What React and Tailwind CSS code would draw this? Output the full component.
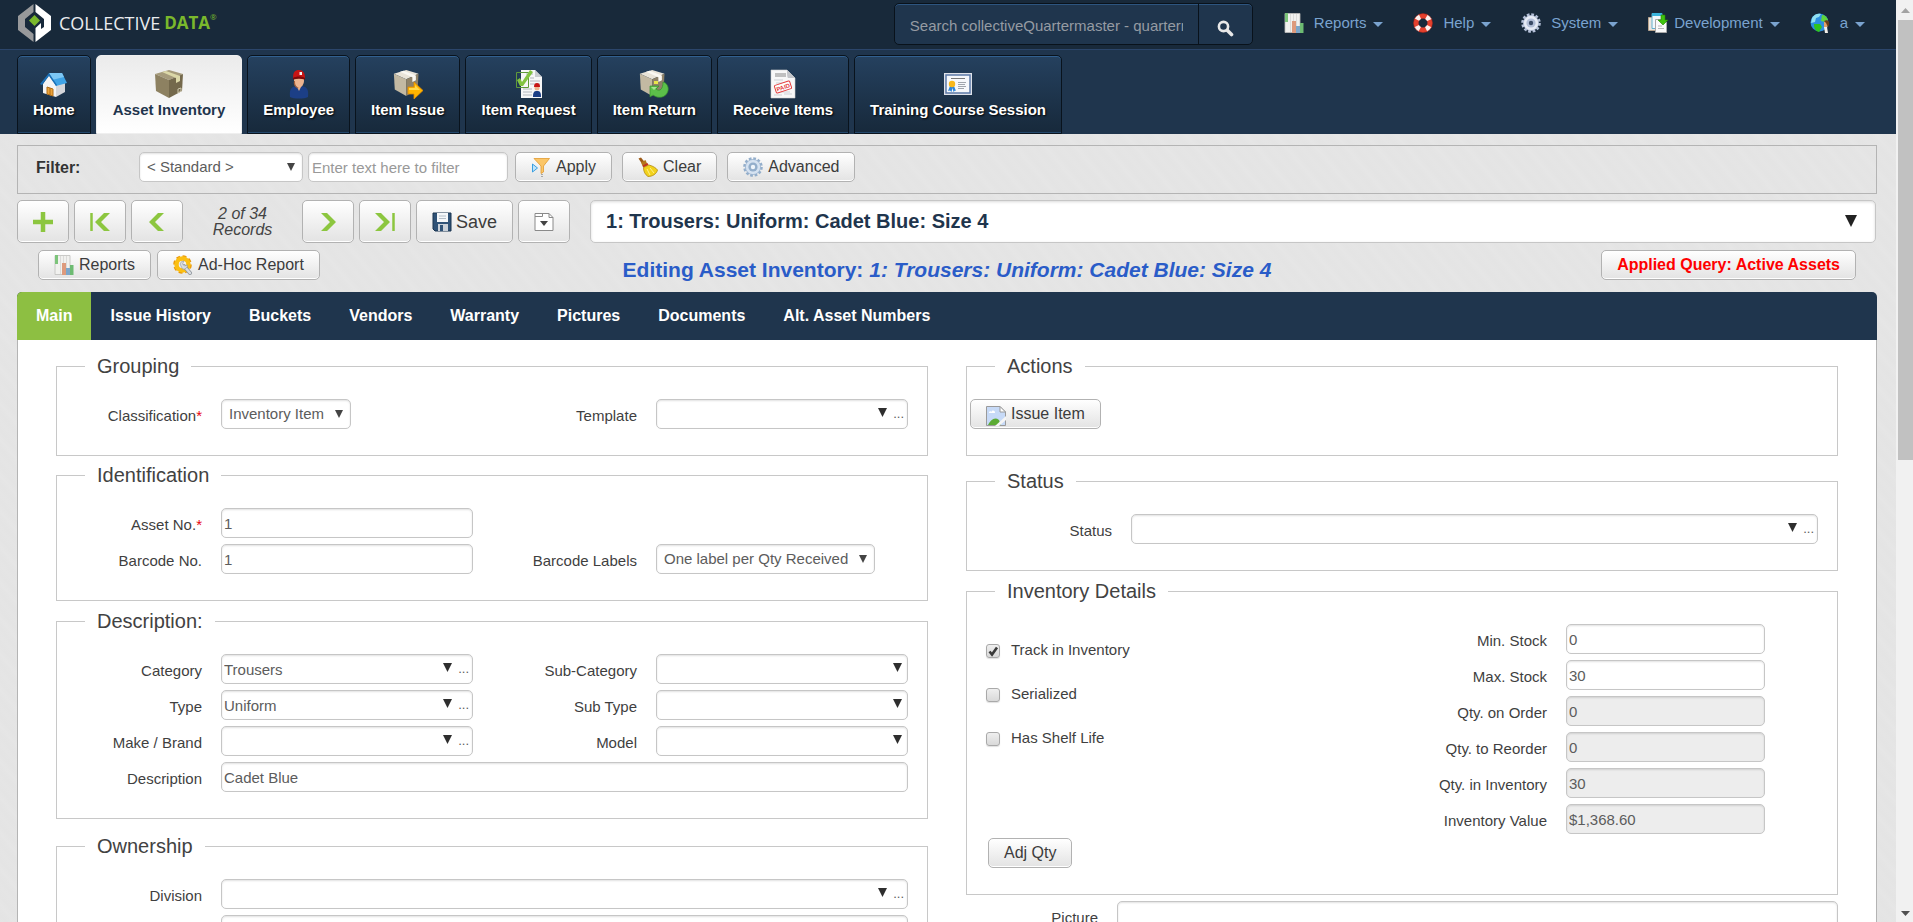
import { useState } from 'react';

/* ---------- icons ---------- */

const LogoMark = () => (
  <svg width="33" height="40" viewBox="0 0 33 40" aria-hidden="true">
    <path d="M15.500 1 0 13v14l15.500 12v-8L7 24V16l8.500-7z" fill="#98999b" />
    <path d="M17.500 1 33 13v14L17.500 39V25l5.500-5v6l3-2V16l-8.500-7z" fill="#fff" />
    <path d="M16.500 12 22 17.500 16.500 23 11 17.500z" fill="#7ab82c" />
  </svg>
);

const HomeIcon = () => (
  <svg width="30" height="30" viewBox="0 0 30 30" aria-hidden="true">
    <path d="M4 15 10 6l7 10v12L4 24z" fill="#f4f4f5" />
    <path d="m17 16 9-2v9l-9 5z" fill="#d5d6da" />
    <path d="M10 4h13l5 10-11 3z" fill="#3fa3e6" />
    <path d="M10 4h13l2 4-12 3z" fill="#7cc7f5" />
    <path d="M10 4 1 15l2 1 7-9 7 10 1-1z" fill="#1b6fb5" />
    <path d="m8 18 6 2v7l-6-2z" fill="#e9a23b" stroke="#b06c14" />
    <path d="M11 19v7" stroke="#b06c14" />
  </svg>
);

const Carton = ({ light }) => (
  <>
    <path d="M1 5 15 1l14 4-14 6z" fill={light ? '#e9e4d8' : '#a69b7b'} />
    <path d="m1 5 14 6v18L2 22z" fill={light ? '#c3b9a2' : '#8d8161'} />
    <path d="m29 5-14 6v18l13-7z" fill={light ? '#8f8268' : '#74694c'} />
    <path d="m8 3 14 6v5l4-2V7L12 2z" fill={light ? '#faf8f2' : '#dcd8a8'} />
  </>
);

const BoxIcon = () => (
  <svg width="30" height="30" viewBox="0 0 30 30" aria-hidden="true">
    <Carton />
    <path d="M24 20l3-1v3l-3 2z" fill="none" stroke="#cfc9ae" />
  </svg>
);

const EmployeeIcon = () => (
  <svg width="30" height="30" viewBox="0 0 30 30" aria-hidden="true">
    <path d="M6 28c-1-9 2-11 9-11s10 2 9 11c-4 2-14 2-18 0z" fill="#1c3f86" />
    <path d="M12 16h6l-3 6z" fill="#e8b08c" />
    <ellipse cx="15" cy="12" rx="5" ry="6.500" fill="#edb48f" />
    <path d="M11 12c0 4 1 6 4 7-3 1-6-3-5-7z" fill="#a5613a" />
    <path d="M9 9c0-6 2-8 6-8s6 3 6 8c-4-1-8-1-12 0z" fill="#c81414" />
    <path d="M9 9c3-2 9-2 12 0v1.500c-4-1-8-1-12 0z" fill="#7d0808" />
    <path d="M15.500 3h2.500v3h-2.500z" fill="#f5f5f5" />
  </svg>
);

const IssueIcon = () => (
  <svg width="30" height="30" viewBox="0 0 30 30" aria-hidden="true">
    <g transform="scale(.88 .93)"><Carton light /></g>
    <path d="M15 18h6v-5l9 8.500L21 30v-5h-6z" fill="#ffb400" stroke="#e08a00" strokeWidth=".8" />
    <path d="M16 19h6v-3l5 5H16z" fill="#ffd84a" />
  </svg>
);

const RequestIcon = () => (
  <svg width="30" height="30" viewBox="0 0 30 30" aria-hidden="true">
    <path d="M7 1h14l7 7v21H7z" fill="#f7f7f7" />
    <path d="m21 1 7 7h-7z" fill="#c9ccd0" />
    <path d="M12 5h7M16 9h4M16 12h10M16 15h10M9 20h9M9 23h9M9 26h9" stroke="#b4b8bd" />
    <path d="M2.500 3.500h12v15h-12z" fill="none" stroke="#5f9a3a" />
    <path d="m3 11 3-2 2 4L16 1l3 2L9 17H6z" fill="#82c341" />
    <path d="M19 28c0-5 1-6 4-6s4 1 4 6z" fill="#1c3f86" />
    <circle cx="23" cy="19" r="2.500" fill="#edb48f" />
    <path d="M20 18c0-3 1-4 3-4s3 1 3 4z" fill="#c81414" />
  </svg>
);

const ReturnIcon = () => (
  <svg width="30" height="30" viewBox="0 0 30 30" aria-hidden="true">
    <g transform="scale(.88 .93)"><Carton light /></g>
    <path d="M15 12h4v3h-4z" fill="#e8e64a" />
    <path d="M11 17h9l-3 3c4 3 7 0 7-7 4 1 6 5 5 9-2 7-10 8-15 4l-3 2z" fill="#5cc04a" stroke="#348f2c" strokeWidth=".7" />
    <path d="M12 18h6l-3 3" fill="#a5e58f" />
  </svg>
);

const PaidIcon = () => (
  <svg width="30" height="30" viewBox="0 0 30 30" aria-hidden="true">
    <path d="M3 1h16l8 8v20H3z" fill="#f8f8f8" stroke="#d0d0d0" strokeWidth=".6" />
    <path d="M19 1c0 4 0 7 1 8h7z" fill="#c4c6ca" />
    <path d="M7 5h11M7 7h11" stroke="#888" />
    <path d="M6 11h9M6 26h8M16 25h8M8 14h14M8 23h14" stroke="#cfd1d6" />
    <g transform="rotate(-18 15 18)">
      <rect x="7" y="14" width="16" height="8" rx="1" fill="#fff" stroke="#e43b3b" />
      <text x="15" y="20.500" textAnchor="middle" fontSize="6" fontWeight="700" fill="#e43b3b" className="[text-shadow:none]">PAID</text>
    </g>
  </svg>
);

const CertificateIcon = () => (
  <svg width="30" height="30" viewBox="0 0 30 30" aria-hidden="true">
    <path d="M1 4h28v22H1z" fill="#dfe3ea" />
    <path d="M3 6h24v18H3z" fill="#f6f8fb" stroke="#5c79a8" strokeWidth="1.500" />
    <path d="M8 9.500h14" stroke="#777" />
    <path d="M15 13.500h8M15 15.500h7M15 17.500h8M15 19.500h6" stroke="#8a8f98" strokeWidth=".8" />
    <path d="m7 17-2 5 2-.5 1.500 1.500 1-4 1 4 1.500-1.500 1 .5-2-5z" fill="#2f86d8" />
    <circle cx="9" cy="15" r="3.200" fill="#f9b81a" />
  </svg>
);

const ChartIcon = () => (
  <svg width="20" height="20" viewBox="0 0 20 20" aria-hidden="true">
    <path d="M1 .5h15v19H1z" fill="#f1f1ef" stroke="#bfbfbc" strokeWidth=".8" />
    <path d="M1 0h3v9H1z" fill="#7cc47a" />
    <path d="M6.500 1v18M9.500 1v18M12.500 1v18" stroke="#d6d6d3" strokeWidth=".8" />
    <path d="M8 8h4v12H8z" fill="#dd9a7d" />
    <path d="M12 13h4v7h-4z" fill="#7ba6c9" />
    <path d="M16 10h3.500v10H16z" fill="#6dbb72" />
  </svg>
);

const LifebuoyIcon = () => (
  <svg width="20" height="20" viewBox="0 0 20 20" aria-hidden="true">
    <circle cx="10" cy="10" r="7" fill="none" stroke="#e5402d" strokeWidth="5" />
    <circle cx="10" cy="10" r="7" fill="none" stroke="#fbf3f0" strokeWidth="5" strokeDasharray="4.400 6.600" strokeDashoffset="-3.300" />
    <circle cx="10" cy="10" r="9.500" fill="none" stroke="#a92518" strokeWidth=".5" />
  </svg>
);

const GearIcon = ({ fill, dark, hub }) => (
  <svg width="20" height="20" viewBox="0 0 20 20" aria-hidden="true">
    <circle cx="10" cy="10" r="8.500" fill="none" stroke={dark} strokeWidth="2.600" strokeDasharray="2.700 1.750" />
    <circle cx="10" cy="10" r="7.600" fill={fill} stroke={dark} strokeWidth=".7" />
    <circle cx="10" cy="10" r="4.600" fill={dark} />
    <circle cx="10" cy="10" r="2.200" fill={hub} />
  </svg>
);

const DevIcon = () => (
  <svg width="20" height="20" viewBox="0 0 20 20" aria-hidden="true">
    <path d="M.5 4.500h9v13h-9z" fill="#e9e4dd" stroke="#b9a48d" />
    <path d="M4 .5h10v15H4z" fill="#f2f8fb" stroke="#62b2cf" />
    <path d="M4 0h10v3H4z" fill="#3ab5dd" />
    <path d="M7.500 6.500h8l3 3v10h-11z" fill="#fafafa" stroke="#a8a8a8" />
    <path d="M10 13h4M10 15.500h6" stroke="#b5b5b5" />
    <path d="M13 2h4v5h3l-5 5-5-5h3z" fill="#3fc20c" stroke="#258503" strokeWidth=".6" />
  </svg>
);

const GlobeIcon = () => (
  <svg width="20" height="20" viewBox="0 0 20 20" aria-hidden="true">
    <circle cx="9.500" cy="9.500" r="9" fill="#2b8fe0" />
    <path d="M2 5c2-4 6-5 9-4l-2 3-3 1-1 4-4 1z" fill="#8fe0f2" />
    <path d="m4 11 6 0 2 3-3 5c-4-1-5-4-5-8z" fill="#2ec41e" />
    <path d="M12 2c3 0 5 2 6 5l-3 2-4-1z" fill="#5fd63a" />
    <path d="M14 9c3-1 4 0 4 3l-1 3h-3z" fill="#e0a06c" />
    <path d="M14 8c3-2 6 0 5 4l-1 2-2-4z" fill="#6b3d18" />
    <path d="M14 14h3l1 6h-3z" fill="#f1eee8" />
  </svg>
);

const FunnelIcon = () => (
  <svg width="20" height="20" viewBox="0 0 20 20" aria-hidden="true">
    <path d="M1.500 7v8l5-4z" fill="#bfe4fb" stroke="#3b9fe0" />
    <path d="M3 1.500h15.500L12.500 9v6l-2.500 1.500V9z" fill="#fbc668" stroke="#e29a2f" strokeWidth=".8" />
    <path d="M11 17v3" stroke="#666" strokeDasharray="1 1" />
  </svg>
);

const BroomIcon = () => (
  <svg width="20" height="20" viewBox="0 0 20 20" aria-hidden="true">
    <path d="M.5 1.500 3 .5l4 5-2.500 2z" fill="#9c5a17" />
    <path d="M3 5.500 7.500 3l2 4.500L5 10z" fill="#b4761c" />
    <path d="m4.500 8.500 5-2.500 1 2-5 2.500z" fill="#c4331f" />
    <path d="M5.500 10.500 11 8c4 1 7 3 8.500 5-1 4-5 6.500-9.500 6.500-3-2-4.500-5-4.500-9z" fill="#f2d21c" stroke="#b28a0b" strokeWidth=".8" />
    <path d="m9 12 3 6M12 11l4 5" stroke="#fff08a" />
  </svg>
);

const WrenchGearIcon = () => (
  <svg width="20" height="20" viewBox="0 0 20 20" aria-hidden="true">
    <circle cx="9.500" cy="9.500" r="7.800" fill="none" stroke="#e8960a" strokeWidth="3" strokeDasharray="3.600 2.500" />
    <circle cx="9.500" cy="9.500" r="6" fill="none" stroke="#fbbf12" strokeWidth="4.500" />
    <path d="m11 11 6 7" stroke="#8f959c" strokeWidth="4" strokeLinecap="round" />
    <path d="m11 11 6 7" stroke="#d9dde1" strokeWidth="2.500" strokeLinecap="round" />
    <path d="M7 9a4 4 0 0 1 4-3L9.500 9l2 2 3-1a4 4 0 0 1-5 4z" fill="#d9dde1" stroke="#8f959c" strokeWidth=".6" />
  </svg>
);

const FloppyIcon = () => (
  <svg width="20" height="20" viewBox="0 0 20 20" aria-hidden="true">
    <path d="M1 1h18v18H3l-2-2z" fill="#2f5277" stroke="#1a3550" />
    <path d="M5 1h11v9H5z" fill="#f5f7f9" />
    <path d="M7 4h7M7 6.500h7" stroke="#b4bec8" />
    <path d="M6 12h10v7H6z" fill="#c9d0d8" />
    <path d="M8 13h3v6H8z" fill="#2f5277" />
  </svg>
);

const BrokenImageIcon = () => (
  <svg width="20" height="20" viewBox="0 0 20 20" className="mt-1" aria-hidden="true">
    <path d="M.5.500H14l5.500 5.500v13.500H.5z" fill="#c7daf7" stroke="#9a9a9a" />
    <path d="M14 .5v5.500h5.500z" fill="#fff" stroke="#9a9a9a" />
    <path d="M3 7c0-2 2-2 2.500-1C6 4 9 4 9 7z" fill="#fff" />
    <path d="M2 19c3-6 7-8 11-5l2 5z" fill="#5cab34" />
    <path d="M20 10 9 20h4l7-6z" fill="#f5f5f5" />
  </svg>
);

const PageDownIcon = () => (
  <svg width="20" height="20" viewBox="0 0 20 20" aria-hidden="true">
    <path d="M1 1.500h14l4 4v13H1z" fill="#fff" stroke="#8a8a8a" />
    <path d="M1 4.500h7.500v-3" fill="none" stroke="#8a8a8a" />
    <path d="M15 1.500v4h4" fill="none" stroke="#8a8a8a" />
    <path d="M6 9h8l-4 5z" fill="#444" />
  </svg>
);

const PlusIcon = () => (
  <svg width="20" height="20" viewBox="0 0 20 20" aria-hidden="true">
    <path d="M10 0v20M0 10h20" stroke="#8cc63f" strokeWidth="4.500" />
  </svg>
);

const ChevronIcon = ({ bar, flip }) => (
  <svg width="20" height="20" viewBox="0 0 20 20" aria-hidden="true">
    <g transform={flip ? 'matrix(-1 0 0 1 20 0)' : undefined}>
      {bar && <path d="M1.500 1v18" stroke="#8cc63f" strokeWidth="2.500" />}
      <path d={bar ? 'M20 1h-6l-9 9 9 9h6l-9-9z' : 'M17 1h-6l-9 9 9 9h6l-9-9z'} fill="#8cc63f" />
    </g>
  </svg>
);

const SearchIcon = () => (
  <svg width="17" height="17" viewBox="0 0 17 17" aria-hidden="true">
    <circle cx="6.500" cy="6.500" r="4.600" fill="none" stroke="#e8e8e8" strokeWidth="2.600" />
    <path d="m10.500 10.500 4 4" stroke="#e8e8e8" strokeWidth="3.600" strokeLinecap="round" />
  </svg>
);

const Triangle = ({ className }) => (
  <svg viewBox="0 0 10 10" preserveAspectRatio="none" className={className} aria-hidden="true">
    <path d="M0 0h10L5 10z" fill="currentColor" />
  </svg>
);

/* ---------- data ---------- */

const modules = [
  { title: 'Home', icon: <HomeIcon /> },
  { title: 'Asset Inventory', icon: <BoxIcon /> },
  { title: 'Employee', icon: <EmployeeIcon /> },
  { title: 'Item Issue', icon: <IssueIcon /> },
  { title: 'Item Request', icon: <RequestIcon /> },
  { title: 'Item Return', icon: <ReturnIcon /> },
  { title: 'Receive Items', icon: <PaidIcon /> },
  { title: 'Training Course Session', icon: <CertificateIcon /> },
];

const menus = [
  { title: 'Reports', icon: <ChartIcon /> },
  { title: 'Help', icon: <LifebuoyIcon /> },
  { title: 'System', icon: <GearIcon fill="#e6ebf5" dark="#b4c0d8" hub="#3a4a66" /> },
  { title: 'Development', icon: <DevIcon />, tight: true },
  { title: 'a', icon: <GlobeIcon /> },
];

const tabs = ['Main', 'Issue History', 'Buckets', 'Vendors', 'Warranty', 'Pictures', 'Documents', 'Alt. Asset Numbers'];

const stock = [
  { id: 'minStock', label: 'Min. Stock', value: '0' },
  { id: 'maxStock', label: 'Max. Stock', value: '30' },
  { id: 'onOrder', label: 'Qty. on Order', value: '0', locked: true },
  { id: 'toReorder', label: 'Qty. to Reorder', value: '0', locked: true },
  { id: 'inInventory', label: 'Qty. in Inventory', value: '30', locked: true },
  { id: 'inventoryValue', label: 'Inventory Value', value: '$1,368.60', locked: true },
];

/* ---------- controls ---------- */

const box = 'rounded-[5px] border border-[#c6c6c6] bg-white text-[15px] text-[#5c5c5c] shadow-[inset_0_1px_2px_rgba(0,0,0,0.12)]';
const raised = 'flex items-center rounded-[5px] border border-[#b2b2b2] bg-linear-to-b from-white to-[#e3e3e3] shadow-[inset_0_-1px_0_#fff] text-[#3c3c3c]';

const Button = ({ icon, children, className = '' }) => (
  <button type="button" className={`${raised} h-[30px] gap-[5px] px-[15px] text-base ${className}`}>
    {icon}
    <span>{children}</span>
  </button>
);

const ToolButton = ({ label, children }) => (
  <button type="button" aria-label={label} className={`${raised} h-[43px] w-[52px] justify-center`}>
    {children}
  </button>
);

const Select = ({ id, option, className = '' }) => (
  <div className={`relative ${className}`}>
    <select id={id} className={`${box} block h-[30px] w-full appearance-none pl-[7px] pr-[25px]`}>
      <option>{option}</option>
    </select>
    <Triangle className="pointer-events-none absolute right-2 top-[11px] h-2 w-2 text-[#444]" />
  </div>
);

const Lookup = ({ id, value, more }) => (
  <div className={`${box} flex h-[30px] items-center pl-[2px] pr-[3px]`}>
    <input id={id} defaultValue={value} className="h-full min-w-0 flex-1 bg-transparent outline-none" />
    <button type="button" aria-label="Open list" className={`pb-[3px] ${more ? 'mr-[6px]' : 'mr-[2px]'}`}>
      <Triangle className="h-[9px] w-[9px] text-[#2e2e2e]" />
    </button>
    {more && <button type="button" className="text-[13px]">...</button>}
  </div>
);

// label column is one third of a half row, one sixth of a full row
const Field = ({ id, label, required, full, children, inputClass = 'flex-1 mr-[19px]' }) => (
  <div className={`flex items-start ${full ? 'col-span-2' : ''}`}>
    <label
      htmlFor={id}
      className={`mr-[19px] shrink-0 whitespace-nowrap pt-[7px] text-right text-[15px] leading-5 text-[#3f3f3f] ${full ? 'w-1/6' : 'w-1/3'}`}
    >
      {label}
      {required && <span className="text-red-600">*</span>}
    </label>
    <div className={`min-w-0 ${inputClass}`}>{children}</div>
  </div>
);

const TextBox = ({ id, value, locked }) => (
  <input
    id={id}
    defaultValue={value}
    readOnly={locked}
    className={`${box} block h-[30px] w-full px-[2px] ${locked ? 'bg-[#ededed]!' : ''}`}
  />
);

const Group = ({ title, className = '', children }) => (
  <fieldset className={`border border-[#c8c8c8] pb-[26px] ${className}`}>
    <legend className="ml-7 px-3 text-xl leading-6 text-[#424242]">{title}</legend>
    <div className="pt-[21px]">{children}</div>
  </fieldset>
);

const Check = ({ id, label, checked }) => (
  <div className="flex items-center gap-[11px]">
    <span className="relative mt-[2px] flex">
      <input
        id={id}
        type="checkbox"
        defaultChecked={checked}
        className="peer h-[14px] w-[14px] appearance-none rounded-[3px] border border-[#a9a9a9] bg-linear-to-b from-[#efefef] to-[#d9d9d9] shadow-[0_1px_1px_rgba(0,0,0,0.12)]"
      />
      <svg viewBox="0 0 14 14" className="pointer-events-none absolute inset-0 hidden h-[14px] w-[14px] peer-checked:block">
        <path d="m3.500 7.500 2.500 3 5-7" fill="none" stroke="#3a3a3a" strokeWidth="2.600" />
      </svg>
    </span>
    <label htmlFor={id} className="text-[15px] leading-5 text-[#3f3f3f]">{label}</label>
  </div>
);

/* ---------- page ---------- */

const TopBar = () => (
  <header className="flex h-[50px] shrink-0 items-start justify-between border-b border-[#2b456a] bg-[#18293a] pl-[18px] pr-[31px]">
    <a href="#home" className="flex items-center gap-2 pt-[3px]">
      <LogoMark />
      <span className="flex items-start font-['Open_Sans',sans-serif] text-lg leading-6 text-[#e9ecef]">
        COLLECTIVE
        <span className="ml-1 text-[17px] font-bold text-[#7ab82c]">DATA</span>
        <sup className="top-0 text-[8px] leading-3 text-[#7ab82c]">®</sup>
      </span>
    </a>
    <div className="flex items-start">
      <form className="mr-[31px] mt-[3px] flex h-[42px] rounded-[5px] border border-[#09121b] bg-[#1f354d] shadow-[inset_0_1px_0_#2d5580]">
        <input
          aria-label="Search"
          placeholder="Search collectiveQuartermaster - quartermaster"
          className="w-[304px] border-r border-[#09121b] px-[15px] pt-1 text-[15px] text-white outline-none placeholder:text-[#959ba3]"
        />
        <button type="button" aria-label="Run search" className="flex w-[53px] items-center justify-center pt-2">
          <SearchIcon />
        </button>
      </form>
      <ul className="flex gap-[30px] pt-[13px]">
        {menus.map((menu) => (
          <li key={menu.title}>
            <a href="#menu" className="flex items-center text-[15px] leading-5 text-[#7aa3cf]">
              {menu.icon}
              <span className={`mr-[7px] ${menu.tight ? 'ml-[6px]' : 'ml-[10px]'}`}>{menu.title}</span>
              <Triangle className="mt-[3px] h-[5px] w-[10px]" />
            </a>
          </li>
        ))}
      </ul>
    </div>
  </header>
);

const ModuleNav = () => (
  <nav className="flex shrink-0 gap-[5px] bg-[#1f354d] pl-[17px] pt-[5px]">
    {modules.map((item) => (
      <a
        key={item.title}
        href="#module"
        className={`flex h-[79px] flex-col items-center whitespace-nowrap rounded-t-[5px] border pt-[13px] text-[15px] font-bold leading-5 
          ${item.title === 'Asset Inventory'
            ? 'border-[#efefef] bg-linear-to-b from-[#ebebeb] to-white px-4 text-[#1f354d]'
            : 'border-[#09131d] bg-linear-to-b from-[#25415f] to-[#17293b] px-[15px] text-white shadow-[inset_0_1px_0_#31608f,inset_0_-1px_0_#24486c] [text-shadow:1px_1px_2px_#000]'}`}
      >
        {item.icon}
        <span className="mt-px">{item.title}</span>
      </a>
    ))}
  </nav>
);

const FilterBar = () => (
  <div className="flex h-[49px] border border-[#b4b4b4] pl-[18px] pt-[6px]">
    <label htmlFor="filter" className="w-[103px] pt-[6px] text-base leading-5 font-bold text-[#333]">Filter:</label>
    <Select id="filter" option="< Standard >" className="w-[164px]" />
    <input aria-label="Filter text" placeholder="Enter text here to filter" className={`${box} ml-[5px] h-[30px] w-[200px] px-[3px] placeholder:text-[#999]`} />
    <div className="ml-[7px] flex gap-[10px]">
      <Button icon={<FunnelIcon />}>Apply</Button>
      <Button icon={<BroomIcon />}>Clear</Button>
      <Button icon={<GearIcon fill="#d5e2f1" dark="#93aecb" hub="#eef4fa" />}>Advanced</Button>
    </div>
  </div>
);

const RecordBar = () => (
  <div className="mt-[6px] flex items-center">
    <div className="flex gap-[5px]">
      <ToolButton label="New"><PlusIcon /></ToolButton>
      <ToolButton label="First"><ChevronIcon bar /></ToolButton>
      <ToolButton label="Previous"><ChevronIcon /></ToolButton>
    </div>
    <p className="w-[119px] text-center text-base leading-4 italic text-[#444]">
      2 of 34
      <br />
      Records
    </p>
    <div className="flex gap-[5px]">
      <ToolButton label="Next"><ChevronIcon flip /></ToolButton>
      <ToolButton label="Last"><ChevronIcon bar flip /></ToolButton>
      <button type="button" className={`${raised} h-[43px] gap-1 px-[15px] text-lg`}>
        <FloppyIcon />
        Save
      </button>
      <ToolButton label="More"><PageDownIcon /></ToolButton>
    </div>
    <div className="relative ml-5 flex-1 pr-px">
      <select
        aria-label="Record"
        className="block h-[43px] w-full appearance-none rounded-[5px] border border-[#c6c6c6] bg-white pl-[15px] pb-[2px] text-xl font-bold text-[#1f354d] shadow-[inset_0_1px_3px_rgba(0,0,0,0.15)]"
      >
        <option>1: Trousers: Uniform: Cadet Blue: Size 4</option>
      </select>
      <Triangle className="pointer-events-none absolute right-5 top-[15px] h-3 w-3 text-[#222]" />
    </div>
  </div>
);

const TitleRow = () => (
  <div className="flex h-[49px] items-start px-[21px] pt-[7px]">
    <div className="flex flex-1 gap-[6px]">
      <Button icon={<ChartIcon />}>Reports</Button>
      <Button icon={<WrenchGearIcon />}>Ad-Hoc Report</Button>
    </div>
    <h1 className="pt-[6px] text-[21px] leading-7 font-bold text-[#2a5cc8]">
      Editing Asset Inventory: <em>1: Trousers: Uniform: Cadet Blue: Size 4</em>
    </h1>
    <div className="flex flex-1 justify-end">
      <Button className="font-bold text-[#f00]!">Applied Query: Active Assets</Button>
    </div>
  </div>
);

const LeftColumn = () => (
  <div className="min-w-0 flex-1">
    <Group title="Grouping">
      <div className="grid grid-cols-2">
        <Field id="classification" label="Classification" required inputClass="">
          <Select id="classification" option="Inventory Item" />
        </Field>
        <Field id="template" label="Template"><Lookup id="template" more /></Field>
      </div>
    </Group>
    <Group title="Identification" className="mt-[7px]">
      <div className="grid grid-cols-2 gap-y-[6px]">
        <div className="col-span-2 grid grid-cols-2">
          <Field id="assetNo" label="Asset No." required><TextBox id="assetNo" value="1" /></Field>
        </div>
        <Field id="barcodeNo" label="Barcode No."><TextBox id="barcodeNo" value="1" /></Field>
        <Field id="barcodeLabels" label="Barcode Labels" inputClass="">
          <Select id="barcodeLabels" option="One label per Qty Received" />
        </Field>
      </div>
    </Group>
    <Group title="Description:" className="mt-2">
      <div className="grid grid-cols-2 gap-y-[6px]">
        <Field id="category" label="Category"><Lookup id="category" value="Trousers" more /></Field>
        <Field id="subCategory" label="Sub-Category"><Lookup id="subCategory" /></Field>
        <Field id="type" label="Type"><Lookup id="type" value="Uniform" more /></Field>
        <Field id="subType" label="Sub Type"><Lookup id="subType" /></Field>
        <Field id="make" label="Make / Brand"><Lookup id="make" more /></Field>
        <Field id="model" label="Model"><Lookup id="model" /></Field>
        <Field id="description" label="Description" full><TextBox id="description" value="Cadet Blue" /></Field>
      </div>
    </Group>
    <Group title="Ownership" className="mt-[15px]">
      <div className="grid grid-cols-2 gap-y-[6px]">
        <Field id="division" label="Division" full><Lookup id="division" more /></Field>
        <Field id="department" full><TextBox id="department" /></Field>
      </div>
    </Group>
  </div>
);

const RightColumn = () => (
  <div className="min-w-0 flex-1">
    <Group title="Actions">
      <div className="pl-[3px]">
        <Button icon={<BrokenImageIcon />}>Issue Item</Button>
      </div>
    </Group>
    <Group title="Status" className="mt-[13px]">
      <Field id="status" label="Status" full><Lookup id="status" more /></Field>
    </Group>
    <Group title="Inventory Details" className="mt-2">
      <div className="flex">
        <div className="flex w-1/2 flex-col pl-[19px] pt-4">
          <div className="flex flex-col gap-6">
            <Check id="track" label="Track in Inventory" checked />
            <Check id="serialized" label="Serialized" />
            <Check id="shelfLife" label="Has Shelf Life" />
          </div>
          <div className="flex pl-[2px] pt-[90px]">
            <Button>Adj Qty</Button>
          </div>
        </div>
        <div className="flex w-1/2 flex-col gap-[6px]">
          {stock.map((row) => (
            <Field key={row.id} id={row.id} label={row.label} inputClass="w-[199px]">
              <TextBox id={row.id} value={row.value} locked={row.locked} />
            </Field>
          ))}
        </div>
      </div>
    </Group>
    <div className="mt-[6px] flex">
      <label htmlFor="picture" className="mr-[19px] w-[132px] pt-[7px] text-right text-[15px] leading-5 text-[#3f3f3f]">Picture</label>
      <textarea id="picture" className={`${box} h-[120px] flex-1 resize-none`} />
    </div>
  </div>
);

const ScrollRail = () => (
  <div className="flex w-[17px] shrink-0 flex-col items-center bg-[#f1f1f1] pl-[2px]" aria-hidden="true">
    <div className="flex h-5 items-center"><Triangle className="h-[5px] w-[9px] rotate-180 text-[#a3a3a3]" /></div>
    <div className="h-[440px] w-full bg-[#c1c1c1]" />
    <div className="flex flex-1 items-end pb-[6px]"><Triangle className="h-[5px] w-[9px] text-[#505050]" /></div>
  </div>
);

const App = () => {
  const [activeTab, setActiveTab] = useState('Main');

  return (
    <div className="flex h-screen overflow-hidden font-['Liberation_Sans',Arial,sans-serif]">
      <div className="flex min-w-0 flex-1 flex-col overflow-hidden bg-[#e5e5e5] bg-[repeating-linear-gradient(50deg,#e5e5e5_0px,#e4e4e4_5px,#e5e5e5_9px,#e6e6e6_11px,#e4e4e4_17px,#e5e5e5_23px)]">
        <TopBar />
        <ModuleNav />
        <main className="ml-[17px] mr-[19px] pt-[11px]">
          <FilterBar />
          <RecordBar />
          <TitleRow />
          <div role="tablist" className="flex h-12 overflow-hidden rounded-t-[5px] bg-[#1f354d]">
            {tabs.map((tab) => (
              <button
                key={tab}
                type="button"
                role="tab"
                aria-selected={activeTab === tab}
                onClick={() => setActiveTab(tab)}
                className={`px-[19px] text-base font-bold text-white ${activeTab === tab ? 'bg-[#8dbf42]' : ''}`}
              >
                {tab}
              </button>
            ))}
          </div>
          <div className="flex gap-[38px] border-x border-[#b4b4b4] bg-white px-[38px] pt-[14px]">
            <LeftColumn />
            <RightColumn />
          </div>
        </main>
      </div>
      <ScrollRail />
    </div>
  );
};

export default App;
